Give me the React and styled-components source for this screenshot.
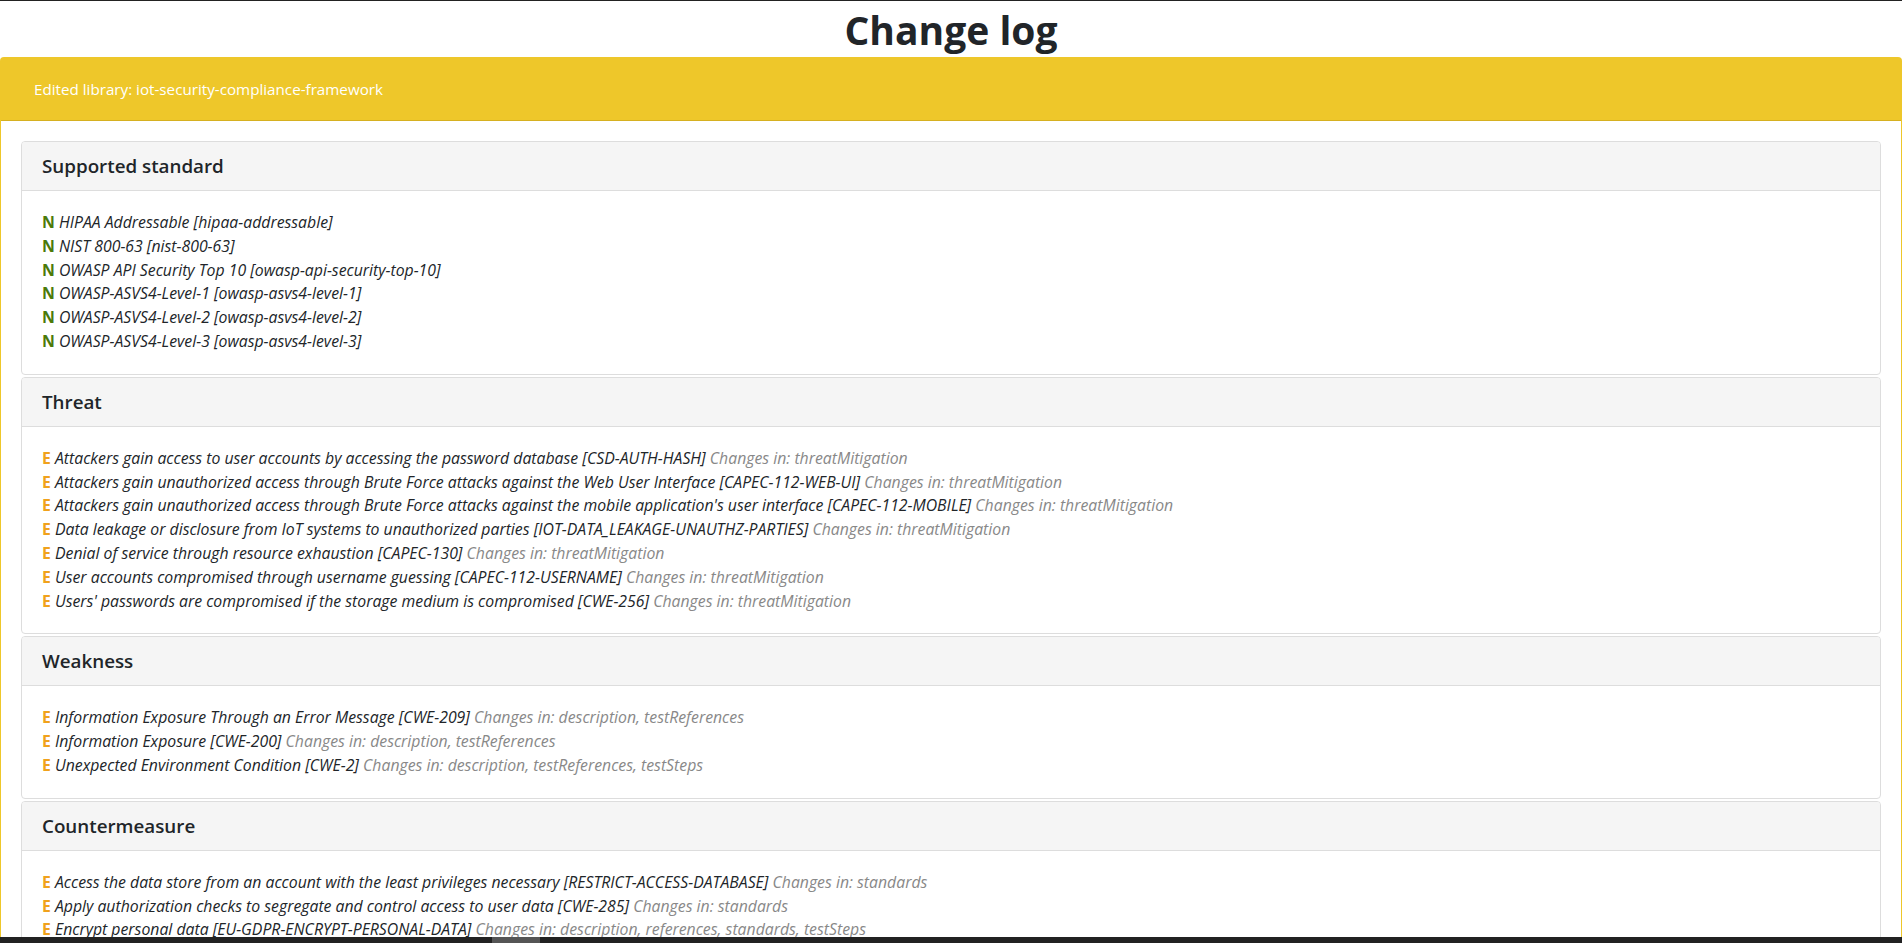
import React from "react";
import styled, { createGlobalStyle } from "styled-components";

const GlobalStyle = createGlobalStyle`
  html, body {
    margin: 0;
    padding: 0;
    overflow: hidden;
    background: #fff;
  }
  body {
    border-top: 1px solid #222;
    font-family: "Open Sans", "Noto Sans", "DejaVu Sans", sans-serif;
    color: #212529;
  }
`;

const sections = [
  {
    title: "Supported standard",
    items: [
      { kind: "N", text: "HIPAA Addressable [hipaa-addressable]" },
      { kind: "N", text: "NIST 800-63 [nist-800-63]" },
      { kind: "N", text: "OWASP API Security Top 10 [owasp-api-security-top-10]" },
      { kind: "N", text: "OWASP-ASVS4-Level-1 [owasp-asvs4-level-1]" },
      { kind: "N", text: "OWASP-ASVS4-Level-2 [owasp-asvs4-level-2]" },
      { kind: "N", text: "OWASP-ASVS4-Level-3 [owasp-asvs4-level-3]" },
    ],
  },
  {
    title: "Threat",
    items: [
      { kind: "E", text: "Attackers gain access to user accounts by accessing the password database [CSD-AUTH-HASH]", changes: "threatMitigation" },
      { kind: "E", text: "Attackers gain unauthorized access through Brute Force attacks against the Web User Interface [CAPEC-112-WEB-UI]", changes: "threatMitigation" },
      { kind: "E", text: "Attackers gain unauthorized access through Brute Force attacks against the mobile application's user interface [CAPEC-112-MOBILE]", changes: "threatMitigation" },
      { kind: "E", text: "Data leakage or disclosure from IoT systems to unauthorized parties [IOT-DATA_LEAKAGE-UNAUTHZ-PARTIES]", changes: "threatMitigation" },
      { kind: "E", text: "Denial of service through resource exhaustion [CAPEC-130]", changes: "threatMitigation" },
      { kind: "E", text: "User accounts compromised through username guessing [CAPEC-112-USERNAME]", changes: "threatMitigation" },
      { kind: "E", text: "Users' passwords are compromised if the storage medium is compromised [CWE-256]", changes: "threatMitigation" },
    ],
  },
  {
    title: "Weakness",
    items: [
      { kind: "E", text: "Information Exposure Through an Error Message [CWE-209]", changes: "description, testReferences" },
      { kind: "E", text: "Information Exposure [CWE-200]", changes: "description, testReferences" },
      { kind: "E", text: "Unexpected Environment Condition [CWE-2]", changes: "description, testReferences, testSteps" },
    ],
  },
  {
    title: "Countermeasure",
    items: [
      { kind: "E", text: "Access the data store from an account with the least privileges necessary [RESTRICT-ACCESS-DATABASE]", changes: "standards" },
      { kind: "E", text: "Apply authorization checks to segregate and control access to user data [CWE-285]", changes: "standards" },
      { kind: "E", text: "Encrypt personal data [EU-GDPR-ENCRYPT-PERSONAL-DATA]", changes: "description, references, standards, testSteps" },
      { kind: "E", text: "Ensure that personal data is stored securely [EU-GDPR-STORE-SECURELY]", changes: "standards" },
    ],
  },
];

const App = () => {
  return (
    <>
      <GlobalStyle />
      <Title>Change log</Title>
      <Panel>
        <PanelHeading>Edited library: iot-security-compliance-framework</PanelHeading>
        <PanelBody>
          {sections.map((section) => (
            <Card key={section.title}>
              <CardHeader>{section.title}</CardHeader>
              <CardBody>
                {section.items.map((item, index) => (
                  <Row key={index}>
                    <Kind kind={item.kind}>{item.kind}</Kind> {item.text}
                    {item.changes && <Changes> Changes in: {item.changes}</Changes>}
                  </Row>
                ))}
              </CardBody>
            </Card>
          ))}
        </PanelBody>
      </Panel>
      <ScrollBar>
        <Thumb />
      </ScrollBar>
    </>
  );
};

export default App;

const Title = styled.h1`
  margin: 0;
  height: 56px;
  display: flex;
  align-items: center;
  justify-content: center;
  font-size: 39px;
  font-weight: 700;
  color: #212529;
`;

const Panel = styled.div`
  border: 1px solid #eec72a;
  border-bottom: none;
  border-radius: 4px 4px 0 0;
  background: #fff;
`;

const PanelHeading = styled.div`
  height: 62px;
  display: flex;
  align-items: center;
  padding: 0 33px;
  background-color: #eec72a;
  border-bottom: 1px solid #d6b020;
  color: #fff;
  font-size: 15.2px;
`;

const PanelBody = styled.div`
  padding: 20px;
`;

const Card = styled.div`
  border: 1px solid #ddd;
  border-radius: 4px;
  margin-bottom: 2px;
  overflow: hidden;
`;

const CardHeader = styled.div`
  height: 48px;
  display: flex;
  align-items: center;
  padding: 0 20px;
  background-color: #f5f5f5;
  border-bottom: 1px solid #ddd;
  font-size: 18.8px;
  font-weight: 600;
  color: #212529;
`;

const CardBody = styled.div`
  padding: 20px;
`;

const Row = styled.div`
  font-size: 15.8px;
  line-height: 23.8px;
  font-style: italic;
  color: #212529;
  white-space: nowrap;
`;

const Kind = styled.span`
  font-style: normal;
  font-weight: 700;
  color: ${(p) => (p.kind === "N" ? "#4b7a0a" : "#f0a21c")};
`;

const Changes = styled.span`
  color: #888;
`;

const ScrollBar = styled.div`
  position: fixed;
  left: 0;
  right: 0;
  bottom: 0;
  height: 6px;
  background: #222;
`;

const Thumb = styled.div`
  margin-left: 492px;
  width: 48px;
  height: 100%;
  background: #555;
`;
